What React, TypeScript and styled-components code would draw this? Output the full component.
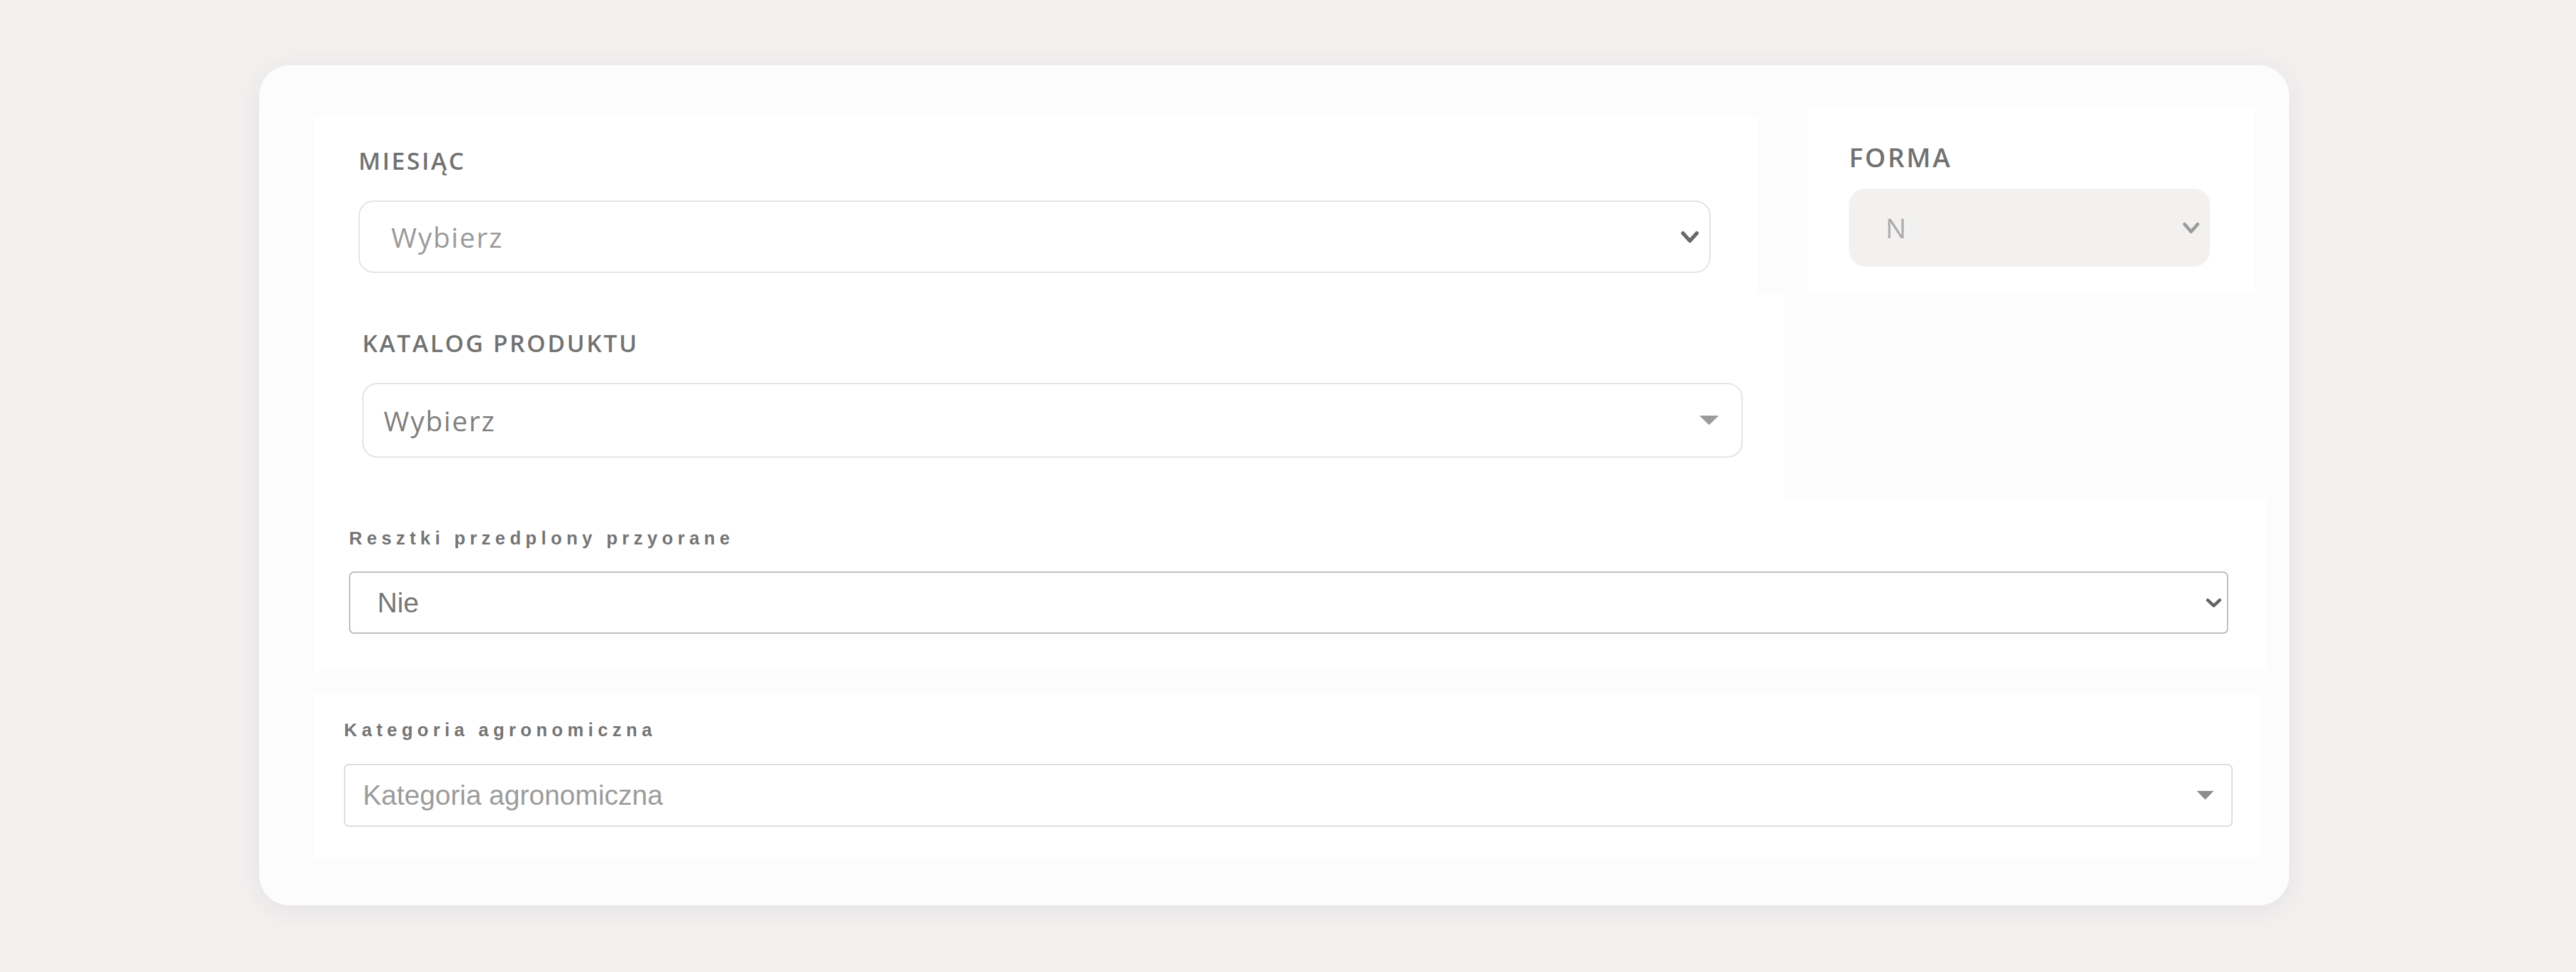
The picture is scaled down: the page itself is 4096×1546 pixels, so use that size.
import styled, { createGlobalStyle } from 'styled-components';

const COLOR = {
  PAGE: '#f2f1f0',
  CARD: '#fcfcfc',
  WHITE: '#ffffff',
  HEADING: '#727272',
  CAPTION: '#757575',
  BORDER_SOFT: '#e2e2e2',
  BORDER_DARK: '#b9b9b9',
  FILLED: '#f2f1f0',
};

const GlobalStyle = createGlobalStyle`
  html, body {
    margin: 0;
    padding: 0;
    background: ${COLOR.PAGE};
  }
  body {
    min-height: 100vh;
  }
`;

const Chevron = ({ w, h, stroke, color }: { w: number; h: number; stroke: number; color: string }) => (
  <svg width={w} height={h} viewBox={`0 0 ${w} ${h}`} fill="none">
    <path
      d={`M${stroke / 2 + 1} ${stroke / 2 + 1} L${w / 2} ${h - stroke / 2 - 1} L${w - stroke / 2 - 1} ${stroke / 2 + 1}`}
      stroke={color}
      strokeWidth={stroke}
      strokeLinecap="round"
      strokeLinejoin="round"
    />
  </svg>
);

const Caret = ({ w, h, color }: { w: number; h: number; color: string }) => (
  <svg width={w} height={h} viewBox={`0 0 ${w} ${h}`}>
    <path d={`M0 0 H${w} L${w / 2} ${h} Z`} fill={color} />
  </svg>
);

const App = () => {
  return (
    <>
      <GlobalStyle />
      <Page>
        <Card>
          <Upper>
            <TopRow>
              <LeftColumn>
                <Section $width={2294} $padding="51px 74px 35px 70px" $offset={17}>
                  <Heading $gap={45}>Miesiąc</Heading>
                  <RoundSelect $height={115} $pl={50} $pr={16} $color="#9a9a9a">
                    <span>Wybierz</span>
                    <Chevron w={30} h={20} stroke={6} color="#6a6a6a" />
                  </RoundSelect>
                </Section>
                <Section $width={2336} $padding="57px 65px 67px 76px">
                  <Heading $gap={45}>Katalog produktu</Heading>
                  <RoundSelect $height={119} $pl={32} $pr={36} $color="#808080">
                    <span>Wybierz</span>
                    <Caret w={31} h={15} color="#9b9b9b" />
                  </RoundSelect>
                </Section>
              </LeftColumn>
              <Section $width={711} $padding="63px 71px 42px 66px" $side>
                <Heading $gap={31} $size={42}>Forma</Heading>
                <FilledSelect $height={124} $pl={56} $pr={14} $color="#ababab">
                  <span>N</span>
                  <Chevron w={28} h={19} stroke={5} color="#9a9a9a" />
                </FilledSelect>
              </Section>
            </TopRow>
            <Section $width={3104} $padding="47px 61px 59px 55px">
              <Caption $gap={38}>Resztki przedplony przyorane</Caption>
              <BoxSelect $height={99} $pl={43} $pr={8} $border={COLOR.BORDER_DARK} $color="#777777">
                <span>Nie</span>
                <Chevron w={26} h={16} stroke={5} color="#626262" />
              </BoxSelect>
            </Section>
          </Upper>
          <Section $width={3093} $padding="43px 43px 49px 47px">
            <Caption $gap={39}>Kategoria agronomiczna</Caption>
            <BoxSelect $height={100} $pl={28} $pr={28} $border="#dadada" $color="#9c9c9c">
              <span>Kategoria agronomiczna</span>
              <Caret w={27} h={14} color="#8c8c8c" />
            </BoxSelect>
          </Section>
        </Card>
      </Page>
    </>
  );
};

const Page = styled.div`
  padding: 104px 0 80px 412px;
`;

const Card = styled.div`
  width: 3228px;
  box-sizing: border-box;
  padding: 64px 0 76px 88px;

  border-radius: 48px;
  background: ${COLOR.CARD};
  box-shadow: 0 6px 44px rgba(50, 35, 45, 0.08);

  display: flex;
  flex-direction: column;
  gap: 37px;
`;

const Upper = styled.div`
  display: flex;
  flex-direction: column;
`;

const TopRow = styled.div`
  display: flex;
  align-items: flex-start;
`;

const LeftColumn = styled.div`
  width: 2336px;
  display: flex;
  flex-direction: column;
`;

const Section = styled.section<{ $width: number; $padding: string; $offset?: number; $side?: boolean }>`
  width: ${(p) => p.$width}px;
  box-sizing: border-box;
  padding: ${(p) => p.$padding};
  margin-top: ${(p) => p.$offset ?? 0}px;
  margin-left: ${(p) => (p.$side ? 38 : 0)}px;

  background: ${COLOR.WHITE};
  display: flex;
  flex-direction: column;
`;

const Heading = styled.label<{ $gap: number; $size?: number }>`
  font-family: 'Open Sans', 'Noto Sans', sans-serif;
  font-weight: 600;
  font-size: ${(p) => p.$size ?? 38}px;
  line-height: 38px;
  letter-spacing: 3px;
  text-transform: uppercase;
  color: ${COLOR.HEADING};
  margin-bottom: ${(p) => p.$gap}px;
`;

const Caption = styled.label<{ $gap: number }>`
  font-family: 'Liberation Sans', Arial, sans-serif;
  font-weight: 700;
  font-size: 29px;
  line-height: 29px;
  letter-spacing: 7.2px;
  color: ${COLOR.CAPTION};
  margin-bottom: ${(p) => p.$gap}px;
`;

const RoundSelect = styled.div<{ $height: number; $pl: number; $pr: number; $color: string }>`
  height: ${(p) => p.$height}px;
  box-sizing: border-box;
  padding: 0 ${(p) => p.$pr}px 0 ${(p) => p.$pl}px;

  border: 2px solid ${COLOR.BORDER_SOFT};
  border-radius: 24px;
  background: ${COLOR.WHITE};

  display: flex;
  align-items: center;
  justify-content: space-between;

  font-family: 'Open Sans', 'Noto Sans', sans-serif;
  font-size: 44px;
  letter-spacing: 2px;
  color: ${(p) => p.$color};
`;

const FilledSelect = styled(RoundSelect)`
  border-color: ${COLOR.FILLED};
  background: ${COLOR.FILLED};
  border-radius: 26px;
`;

const BoxSelect = styled.div<{ $height: number; $pl: number; $pr: number; $border: string; $color: string }>`
  height: ${(p) => p.$height}px;
  box-sizing: border-box;
  padding: 0 ${(p) => p.$pr}px 0 ${(p) => p.$pl}px;

  border: 2px solid ${(p) => p.$border};
  border-radius: 8px;
  background: ${COLOR.WHITE};

  display: flex;
  align-items: center;
  justify-content: space-between;

  font-family: 'Liberation Sans', Arial, sans-serif;
  font-size: 44px;
  color: ${(p) => p.$color};
`;

export default App;
